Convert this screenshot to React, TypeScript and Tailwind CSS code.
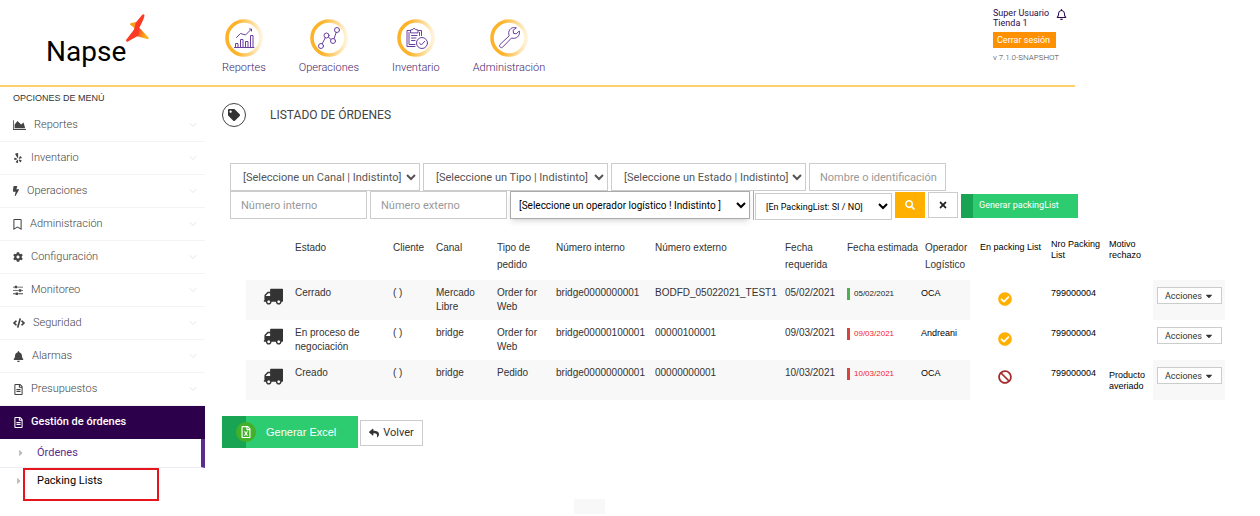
import type { ReactNode } from 'react'
import {
  FaBan,
  FaBell,
  FaBolt,
  FaCaretDown,
  FaCaretRight,
  FaCheckCircle,
  FaCode,
  FaCog,
  FaRegBell,
  FaRegBookmark,
  FaRegFileAlt,
  FaRegFileExcel,
  FaReply,
  FaSearch,
  FaTag,
  FaTimes,
  FaYelp,
} from 'react-icons/fa'
import { ChevronDown } from 'lucide-react'

function AreaChartIcon() {
  return (
    <svg viewBox="0 0 2048 1792" width="13" height="12" fill="currentColor">
      <path d="M2048 1536v128h-2048v-1536h128v1408h1920zm-384-1024l256 896h-1664v-576l448-576 576 576z" />
    </svg>
  )
}

function SlidersIcon() {
  return (
    <svg viewBox="0 0 1536 1792" width="10" height="12" fill="currentColor">
      <path d="M352 1408v128h-352v-128h352zm352-128q26 0 45 19t19 45v256q0 26-19 45t-45 19h-256q-26 0-45-19t-19-45v-256q0-26 19-45t45-19h256zm160-384v128h-864v-128h864zm-640-512v128h-224v-128h224zm1312 1024v128h-736v-128h736zm-960-1152q26 0 45 19t19 45v256q0 26-19 45t-45 19h-256q-26 0-45-19t-19-45v-256q0-26 19-45t45-19h256zm640 512q26 0 45 19t19 45v256q0 26-19 45t-45 19h-256q-26 0-45-19t-19-45v-256q0-26 19-45t45-19h256zm320 128v128h-224v-128h224zm0-512v128h-864v-128h864z" />
    </svg>
  )
}

function TruckIcon() {
  return (
    <svg viewBox="0 0 1792 1792" width="20" height="20" fill="#333">
      <path d="M640 1408q0-52-38-90t-90-38-90 38-38 90 38 90 90 38 90-38 38-90zm-384-512h384v-256h-158q-13 0-22 9l-195 195q-9 9-9 22v30zm1280 512q0-52-38-90t-90-38-90 38-38 90 38 90 90 38 90-38 38-90zm256-1088v1024q0 15-4 26.500t-13.500 18.500-16.500 11.500-23.500 6-22.500 2-25.500 0-22.500-.5q0 106-75 181t-181 75-181-75-75-181h-384q0 106-75 181t-181 75-181-75-75-181h-64q-3 0-22.500.5t-25.500 0-22.500-2-23.500-6-16.500-11.500-13.500-18.500-4-26.500q0-26 19-45t45-19v-320q0-8-.5-35t0-38 2.500-34.500 6.500-37 14-30.500 22.500-30l198-198q19-19 50.500-32t58.500-13h160v-192q0-26 19-45t45-19h1024q26 0 45 19t19 45z" />
    </svg>
  )
}

function Logo() {
  return (
    <a href="#" className="flex items-start pl-[46px] pt-[14px]">
      <span className="pt-[22px] text-[28px] leading-8 text-black">Napse</span>
      <svg viewBox="0 0 24 30" width="24" height="30">
        <defs>
          <linearGradient id="spark" x1="0" y1="0" x2="1" y2="0.4">
            <stop offset="0.3" stopColor="#fb3b25" />
            <stop offset="1" stopColor="#fdb515" />
          </linearGradient>
        </defs>
        <path d="M4 10.500Q3.500 9 5.500 9L12 7.500 9.500 15z" fill="#f9a01b" />
        <path d="M9 13L14 14.500 22.500 23.500Q23.500 25.500 21 25L12 22.500 6 21z" fill="url(#spark)" />
        <path d="M16 1Q17.500-0.500 18.500 1 18.500 4 13.500 13.500L12.500 21.500 2 27.500Q0 28.500 0 26L8.500 15 9.500 9z" fill="#fb3b25" />
      </svg>
    </a>
  )
}

function Ring({ id, children }: { id: string; children: ReactNode }) {
  return (
    <svg viewBox="0 0 38 38" width="38" height="38" fill="none" stroke="#6a3fa0" strokeLinecap="round" strokeLinejoin="round">
      <defs>
        <linearGradient id={id}>
          <stop offset="0.3" stopColor="#fcb329" />
          <stop offset="1" stopColor="#fff3d8" />
        </linearGradient>
      </defs>
      <circle cx="19" cy="19" r="17" stroke={`url(#${id})`} strokeWidth="3.600" />
      {children}
    </svg>
  )
}

const navItems = [
  {
    label: 'Reportes',
    icon: (
      <g>
        <path d="M9.500 28.500H29M10.500 28V24.500H13V28M15.500 28V20.500H18V28M20.500 28V22.500H23V28M25.500 28V16.500H28V28" />
        <path d="M11.500 18.500L15.500 14.500 20.500 16 26 10.500" />
        <path d="M24.500 10H26.500V12" />
      </g>
    ),
  },
  {
    label: 'Operaciones',
    icon: (
      <g>
        <circle cx="11" cy="27" r="2.500" />
        <circle cx="16.500" cy="16.500" r="2.500" />
        <circle cx="23" cy="22" r="2.500" />
        <circle cx="27" cy="11" r="2.500" />
        <path d="M12.200 24.700L15.300 18.800M18.500 18.200L21 20.400M24 19.600L26.200 13.400" />
      </g>
    ),
  },
  {
    label: 'Inventario',
    icon: (
      <g>
        <path d="M13.500 11.500H10V27.500H18M21.500 11.500H24.500V16.500" />
        <path d="M12 13.500V25.500H18M22.500 13.500V16.500M13.500 13.500V11L16 10.500Q17 7.500 18.500 10.500L21 11V13.500ZM14.500 16.500H20M14.500 19H19M14.500 21.500H18" />
        <circle cx="25" cy="24" r="5.500" fill="white" />
        <path d="M22.500 24L24.300 26 27.700 22.300" />
      </g>
    ),
  },
  {
    label: 'Administración',
    icon: (
      <path d="M26 8.800C22 7.500 18 10.500 18.800 15.200 18.900 16 19 16.400 19.200 16.800L10 25.500C8.800 27.500 10.800 29.500 12.500 28.300L21.500 19C26 20.500 30.500 17 29.300 12L26.200 14.800 23.500 14.300 23.200 11.600Z" />
    ),
  },
]

const menuItems = [
  { label: 'Reportes', icon: <AreaChartIcon /> },
  { label: 'Inventario', icon: <FaYelp size={10} /> },
  { label: 'Operaciones', icon: <FaBolt size={10} className="-mx-0.5" /> },
  { label: 'Administración', icon: <FaRegBookmark size={11} className="-mx-px" /> },
  { label: 'Configuración', icon: <FaCog size={10} /> },
  { label: 'Monitoreo', icon: <SlidersIcon /> },
  { label: 'Seguridad', icon: <FaCode size={12} /> },
  { label: 'Alarmas', icon: <FaBell size={11} /> },
  { label: 'Presupuestos', icon: <FaRegFileAlt size={11} className="-mr-px" /> },
]

const orders = [
  {
    estado: 'Cerrado',
    canal: 'Mercado Libre',
    tipo: 'Order for Web',
    interno: 'bridge0000000001',
    externo: 'BODFD_05022021_TEST1',
    fecha: '05/02/2021',
    late: false,
    operador: 'OCA',
    packed: true,
    packingList: '799000004',
    motivo: '',
  },
  {
    estado: 'En proceso de negociación',
    canal: 'bridge',
    tipo: 'Order for Web',
    interno: 'bridge00000100001',
    externo: '00000100001',
    fecha: '09/03/2021',
    late: true,
    operador: 'Andreani',
    packed: true,
    packingList: '799000004',
    motivo: '',
  },
  {
    estado: 'Creado',
    canal: 'bridge',
    tipo: 'Pedido',
    interno: 'bridge00000000001',
    externo: '00000000001',
    fecha: '10/03/2021',
    late: true,
    operador: 'OCA',
    packed: false,
    packingList: '799000004',
    motivo: 'Producto averiado',
  },
]

function Header() {
  return (
    <header className="mr-[185px] flex h-[87px] border-b-2 border-[#fdd06a]">
      <div className="w-[205px] shrink-0">
        <Logo />
      </div>
      <nav className="flex gap-[33px] pl-[17px] pt-[19px]">
        {navItems.map((item) => (
          <a key={item.label} href="#" className="flex flex-col items-center text-[11px] font-light text-[#3f1d6b]">
            <Ring id={`ring-${item.label.slice(0, 3)}`}>{item.icon}</Ring>
            <span className="leading-[22px]">{item.label}</span>
          </a>
        ))}
      </nav>
      <div className="ml-auto w-[82px] pt-2 text-[9px] text-[#2d0a4e]">
        <div className="flex items-center gap-[7px]">
          <p className="whitespace-nowrap leading-[10px]">
            Super Usuario
            <br />
            Tienda 1
          </p>
          <button aria-label="Notificaciones" className="-mt-2">
            <FaRegBell size={11} />
          </button>
        </div>
        <button className="mt-1 h-4 w-[63px] bg-[#ff9100] pl-1 text-left leading-4 text-white">Cerrar sesión</button>
        <p className="mt-1 whitespace-nowrap text-[8px] font-light leading-3 text-[#444]">v 7.1.0-SNAPSHOT</p>
      </div>
    </header>
  )
}

function Sidebar() {
  return (
    <aside className="w-[205px] shrink-0">
      <h2 className="pl-[13px] pt-1.5 font-['Liberation_Sans',sans-serif] text-[9px] leading-[11px] text-[#333]">OPCIONES DE MENÚ</h2>
      <ul className="mt-[5px]">
        {menuItems.map((item) => (
          <li key={item.label} className="h-[33px] border-b border-[#f4f4f4]">
            <a href="#" className="flex h-full items-center gap-2 pl-[13px] pr-1.5 text-[11px] font-light text-[#444]">
              {item.icon}
              <span>{item.label}</span>
              <ChevronDown size={12} strokeWidth={1} className="ml-auto text-[#ccc]" />
            </a>
          </li>
        ))}
        <li>
          <a href="#" className="flex h-[33px] items-center gap-[7px] bg-[#2d004b] pl-[13px] text-[11px] font-medium text-white">
            <FaRegFileAlt size={11} />
            Gestión de órdenes
          </a>
          <ul className="text-[11px]">
            <li className="border-b border-r-4 border-b-[#eeecf2] border-r-[#5b2d91]">
              <a href="#" className="flex h-7 items-center gap-[11px] pl-4 text-[#5b2d91]">
                <FaCaretRight size={10} className="text-[#bbb]" />
                Órdenes
              </a>
            </li>
            <li className="flex items-start">
              <FaCaretRight size={10} className="mt-2 ml-[14px] -mr-px text-[#bbb]" />
              <a href="#" className="h-[33px] w-[136px] border-2 border-[#e8141c] pl-3 leading-[22px] text-black">
                Packing Lists
              </a>
            </li>
          </ul>
        </li>
      </ul>
    </aside>
  )
}

function Filters() {
  const field = 'h-7 border border-[#ccc] bg-white text-[11px] text-[#555]'
  return (
    <form className="pl-2 pt-9">
      <div className="flex gap-[3px]">
        <select aria-label="Canal" className={`${field} w-[190px] pl-2`}>
          <option>[Seleccione un Canal | Indistinto]</option>
        </select>
        <select aria-label="Tipo" className={`${field} w-[185px] pl-2`}>
          <option>[Seleccione un Tipo | Indistinto]</option>
        </select>
        <select aria-label="Estado" className={`${field} w-[195px] pl-2`}>
          <option>[Seleccione un Estado | Indistinto]</option>
        </select>
        <input aria-label="Nombre o identificación" placeholder="Nombre o identificación" className={`${field} w-[137px] pl-2.5 placeholder:text-[#999]`} />
      </div>
      <div className="flex items-end gap-[3px]">
        <input aria-label="Número interno" placeholder="Número interno" className={`${field} w-[137px] self-start pl-2.5 placeholder:text-[#999]`} />
        <input aria-label="Número externo" placeholder="Número externo" className={`${field} w-[137px] self-start pl-2.5 placeholder:text-[#999]`} />
        <select aria-label="Operador logístico" className="h-7 w-[240px] self-start border border-[#aaa] bg-white pl-1 text-[10px] text-black shadow-md">
          <option>[Seleccione un operador logístico ! Indistinto ]</option>
        </select>
        <div className="border-l border-[#aaa] pl-px pt-0.5">
          <select aria-label="En PackingList" className="block h-[27px] w-[137px] border border-[#ccc] bg-white pl-1.5 text-[9px] text-black">
            <option>[En PackingList: SI / NO]</option>
          </select>
        </div>
        <button type="button" aria-label="Buscar" className="mb-0.5 flex h-[26px] w-[30px] items-center justify-center bg-[#ffb000] text-white">
          <FaSearch size={10} />
        </button>
        <button type="button" aria-label="Limpiar" className="mb-0.5 flex h-[26px] w-[30px] items-center justify-center border border-[#ccc] text-[#222]">
          <FaTimes size={10} />
        </button>
        <button type="button" className="mb-0.5 h-6 w-[117px] border-l-12 border-[#18a452] bg-[#2ecc71] pl-1.5 text-left text-[9px] text-white">
          Generar packingList
        </button>
      </div>
    </form>
  )
}

function OrdersTable() {
  return (
    <table className="ml-6 mt-2 w-[979px] table-fixed text-left font-['Liberation_Sans',sans-serif] text-[10px] text-[#333]">
      <colgroup>
        <col className="w-[49px]" />
        <col className="w-[98px]" />
        <col className="w-[43px]" />
        <col className="w-[61px]" />
        <col className="w-[59px]" />
        <col className="w-[99px]" />
        <col className="w-[130px]" />
        <col className="w-[62px]" />
        <col className="w-[78px]" />
        <col className="w-[55px]" />
        <col className="w-[71px]" />
        <col className="w-[58px]" />
        <col className="w-[44px]" />
        <col className="w-[72px]" />
      </colgroup>
      <thead>
        <tr className="h-[52px] align-top leading-[17px] *:pt-[11px] *:font-normal">
          <th />
          <th>Estado</th>
          <th>Cliente</th>
          <th>Canal</th>
          <th className="pr-4">Tipo de pedido</th>
          <th>Número interno</th>
          <th>Número externo</th>
          <th>Fecha requerida</th>
          <th className="whitespace-nowrap">Fecha estimada</th>
          <th>Operador Logístico</th>
          <th className="whitespace-nowrap text-[9px] text-black">En packing List</th>
          <th className="text-[9px] leading-[11px] text-black">Nro Packing List</th>
          <th className="text-[9px] leading-[11px] text-black">Motivo rechazo</th>
          <th />
        </tr>
      </thead>
      <tbody>
        {orders.map((order) => (
          <tr key={order.interno} className="group h-10 align-top leading-[14px] *:pt-1.5">
            <td className="pl-[17px] group-odd:bg-[#f8f8f8]">
              <TruckIcon />
            </td>
            <td className="pr-6 group-odd:bg-[#f8f8f8]">{order.estado}</td>
            <td className="group-odd:bg-[#f8f8f8]">( )</td>
            <td className="pr-4 group-odd:bg-[#f8f8f8]">{order.canal}</td>
            <td className="pr-2 group-odd:bg-[#f8f8f8]">{order.tipo}</td>
            <td className="group-odd:bg-[#f8f8f8]">{order.interno}</td>
            <td className="group-odd:bg-[#f8f8f8]">{order.externo}</td>
            <td className="group-odd:bg-[#f8f8f8]">{order.fecha}</td>
            <td className="group-odd:bg-[#f8f8f8]">
              <span
                className={`mt-0.5 block border-l-3 pl-1 text-[8px] leading-3 ${
                  order.late ? 'border-[#d9433f] text-[#f5222d]' : 'border-[#4caf50] text-[#222]'
                }`}
              >
                {order.fecha}
              </span>
            </td>
            <td className="text-[9px] text-black">
              <span className="-mt-1.5 -ml-1 mr-2.5 block h-10 pt-1.5 group-odd:bg-[#f8f8f8]">{order.operador}</span>
            </td>
            <td className="pl-[18px]">
              {order.packed ? (
                <FaCheckCircle size={14} className="mt-1.5 text-[#ffb000]" />
              ) : (
                <FaBan size={14} className="mt-1 text-[#a52a2a]" />
              )}
            </td>
            <td className="text-[9px] text-black">{order.packingList}</td>
            <td className="text-[9px] leading-[11px] text-black">
              <span className="block pt-1">{order.motivo}</span>
            </td>
            <td className="pl-1 group-odd:bg-[#f8f8f8]">
              <button className="mt-px flex h-[17px] w-[65px] items-center justify-center gap-0.5 border border-[#ccc] bg-white font-[Roboto,sans-serif] text-[9px] text-[#333]">
                Acciones <FaCaretDown size={10} />
              </button>
            </td>
          </tr>
        ))}
      </tbody>
    </table>
  )
}

export default function App() {
  return (
    <div className="min-h-screen bg-white font-[Roboto,sans-serif]">
      <Header />
      <div className="flex">
        <Sidebar />
        <main className="min-w-0 flex-1 pl-[17px] pt-4">
          <div className="flex items-center gap-6">
            <span className="flex size-6 items-center justify-center rounded-full border border-[#444] text-[#333]">
              <FaTag size={12} />
            </span>
            <h1 className="text-xs text-[#444]">LISTADO DE ÓRDENES</h1>
          </div>
          <Filters />
          <OrdersTable />
          <div className="mt-4 flex items-end gap-0.5">
            <button className="flex h-8 w-[136px] items-center bg-linear-to-r from-[#18a452] from-[24px] to-[#2ecc71] to-[24px] pl-3.5 font-['Liberation_Sans',sans-serif] text-[11px] text-white">
              <span className="mr-2.5 flex size-5 items-center justify-center rounded-full bg-[#43b02a]">
                <FaRegFileExcel size={12} />
              </span>
              Generar Excel
            </button>
            <button className="mb-0.5 flex h-[26px] w-[63px] items-center justify-center gap-1 border border-[#ccc] text-[11px] text-[#333]">
              <FaReply size={10} />
              Volver
            </button>
          </div>
          <div className="ml-[352px] mt-[51px] h-[15px] w-[31px] bg-[#f8f8f8]" />
        </main>
      </div>
    </div>
  )
}
